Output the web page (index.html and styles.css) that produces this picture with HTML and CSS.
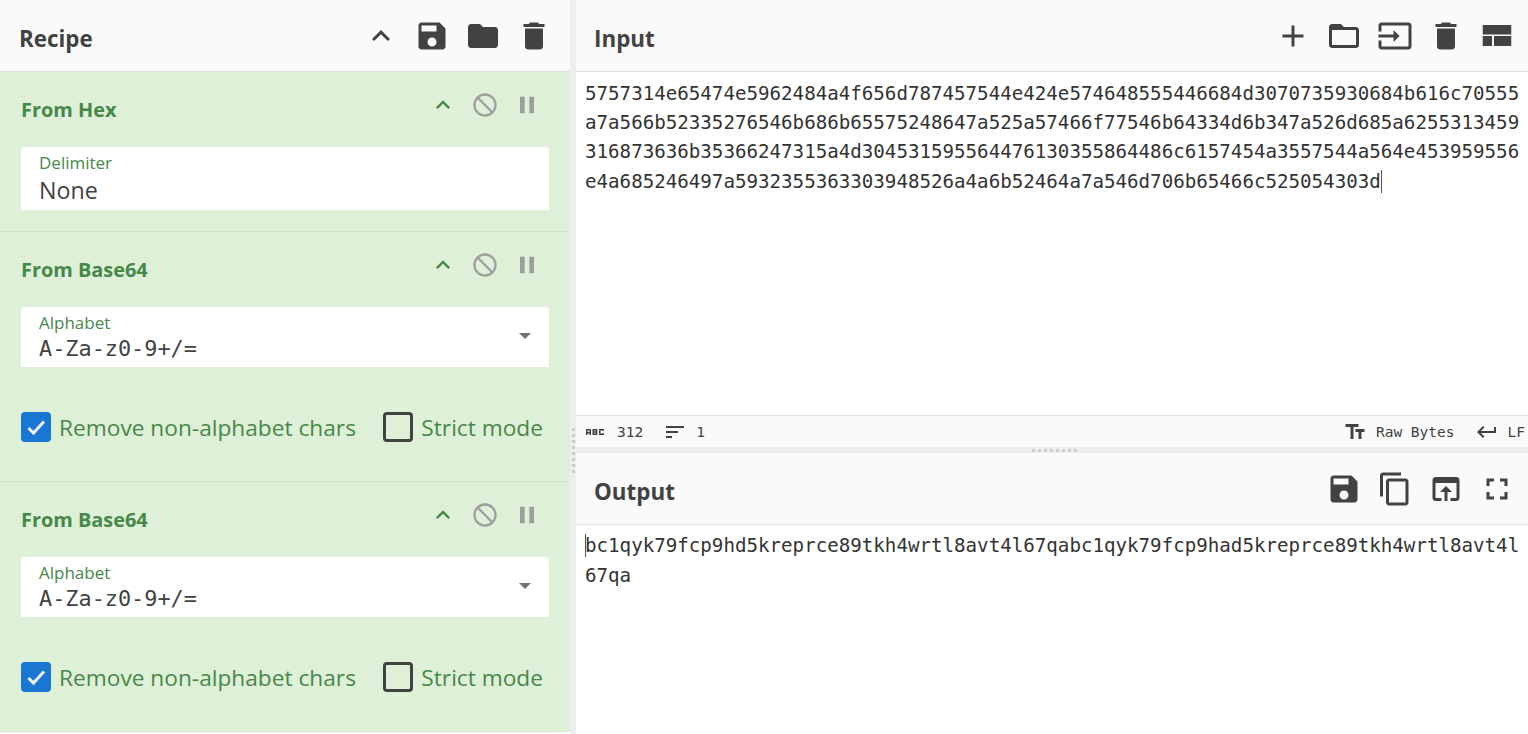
FILE: index.html
```html
<!DOCTYPE html>
<html lang="en">
<head>
<meta charset="utf-8">
<title>Recipe</title>
<link rel="stylesheet" href="styles.css">
</head>
<body>
<svg class="defs" aria-hidden="true">
  <symbol id="i-up" viewBox="0 0 24 24"><path d="M7.41 15.41L12 10.83l4.59 4.58L18 14l-6-6-6 6z"/></symbol>
  <symbol id="i-save" viewBox="0 0 24 24"><path d="M17 3H5c-1.11 0-2 .9-2 2v14c0 1.1.89 2 2 2h14c1.1 0 2-.9 2-2V7l-4-4zm-5 16c-1.66 0-3-1.34-3-3s1.34-3 3-3 3 1.34 3 3-1.34 3-3 3zm3-10H5V5h10v4z"/></symbol>
  <symbol id="i-folder" viewBox="0 0 24 24"><path d="M10 4H4c-1.1 0-1.99.9-1.99 2L2 18c0 1.1.9 2 2 2h16c1.1 0 2-.9 2-2V8c0-1.1-.9-2-2-2h-8l-2-2z"/></symbol>
  <symbol id="i-trash" viewBox="0 0 24 24"><path d="M6 19c0 1.1.9 2 2 2h8c1.1 0 2-.9 2-2V7H6v12zM19 4h-3.5l-1-1h-5l-1 1H5v2h14V4z"/></symbol>
  <symbol id="i-block" viewBox="0 0 24 24"><path transform="matrix(-1 0 0 1 24 0)" d="M12 2C6.48 2 2 6.48 2 12s4.48 10 10 10 10-4.48 10-10S17.52 2 12 2zM4 12c0-4.42 3.58-8 8-8 1.85 0 3.55.63 4.9 1.69L5.69 16.9C4.63 15.55 4 13.85 4 12zm8 8c-1.85 0-3.55-.63-4.9-1.69L18.31 7.1C19.37 8.45 20 10.15 20 12c0 4.42-3.58 8-8 8z"/></symbol>
  <symbol id="i-pause" viewBox="0 0 24 24"><path d="M6 19h4V5H6v14zm8-14v14h4V5h-4z"/></symbol>
  <symbol id="i-add" viewBox="0 0 24 24"><path d="M19 13h-6v6h-2v-6H5v-2h6V5h2v6h6v2z"/></symbol>
  <symbol id="i-open" viewBox="0 0 24 24"><path d="M20 6h-8l-2-2H4c-1.1 0-1.99.9-1.99 2L2 18c0 1.1.9 2 2 2h16c1.1 0 2-.9 2-2V8c0-1.1-.9-2-2-2zm0 12H4V8h16v10z"/></symbol>
  <symbol id="i-input" viewBox="0 0 24 24"><path d="M21 3.01H3c-1.1 0-2 .9-2 2V9h2V4.99h18v14.03H3V15H1v4.01c0 1.1.9 1.98 2 1.98h18c1.1 0 2-.88 2-1.98v-14c0-1.11-.9-2-2-2zM11 16l4-4-4-4v3H1v2h10v3z"/></symbol>
  <symbol id="i-layout" viewBox="0 0 24 24"><path d="M2.5 4.7h19V11h-19zM2.5 12h6.2v6.7H2.5zM10 12h11.5v6.7H10z"/></symbol>
  <symbol id="i-copy" viewBox="0 0 24 24"><path d="M16 1H4c-1.1 0-2 .9-2 2v14h2V3h12V1zm3 4H8c-1.1 0-2 .9-2 2v14c0 1.1.9 2 2 2h11c1.1 0 2-.9 2-2V7c0-1.1-.9-2-2-2zm0 16H8V7h11v14z"/></symbol>
  <symbol id="i-browser" viewBox="0 0 24 24"><path d="M19 4H5c-1.11 0-2 .9-2 2v12c0 1.1.89 2 2 2h4v-2H5V8h14v10h-4v2h4c1.1 0 2-.9 2-2V6c0-1.1-.89-2-2-2zm-7 6l-4 4h3v6h2v-6h3l-4-4z"/></symbol>
  <symbol id="i-full" viewBox="0 0 24 24"><path d="M7 14H5v5h5v-2H7v-3zm-2-4h2V7h3V5H5v5zm12 7h-3v2h5v-5h-2v3zM14 5v2h3v3h2V5h-5z"/></symbol>
  <symbol id="i-abc" viewBox="0 0 24 24"><path d="M21 11h-1.5v-.5h-2v3h2V13H21v1c0 .55-.45 1-1 1h-3c-.55 0-1-.45-1-1v-4c0-.55.45-1 1-1h3c.55 0 1 .45 1 1v1zM8 10v5H6.5v-1.5h-2V15H3v-5c0-.55.45-1 1-1h3c.55 0 1 .45 1 1zm-1.5.5h-2V12h2v-1.5zm7 1.5c.55 0 1 .45 1 1v1c0 .55-.45 1-1 1h-4V9h4c.55 0 1 .45 1 1v1c0 .55-.45 1-1 1zM11 10.5v.75h2v-.75h-2zm2 2.25h-2v.75h2v-.75z"/></symbol>
  <symbol id="i-sort" viewBox="0 0 24 24"><path d="M3 18h6v-2H3v2zM3 6v2h18V6H3zm0 7h12v-2H3v2z"/></symbol>
  <symbol id="i-text" viewBox="0 0 24 24"><path d="M2.5 4v3h5v12h3V7h5V4h-13zm19 5h-9v3h3v7h3v-7h3V9z"/></symbol>
  <symbol id="i-return" viewBox="0 0 24 24"><path d="M19 7v4H5.83l3.58-3.59L8 6l-6 6 6 6 1.41-1.41L5.83 13H21V7z"/></symbol>
</svg>

<div class="app">
  <section class="recipe">
    <header class="bar">
      <h1 class="bar-title">Recipe</h1>
      <div class="tools tools-recipe">
        <svg class="tool"><use href="#i-up"/></svg>
        <svg class="tool"><use href="#i-save"/></svg>
        <svg class="tool"><use href="#i-folder"/></svg>
        <svg class="tool"><use href="#i-trash"/></svg>
      </div>
    </header>

    <article class="op op-short">
      <div class="op-head">
        <h2 class="op-title">From Hex</h2>
        <div class="op-tools">
          <svg class="op-icon op-up"><use href="#i-up"/></svg>
          <svg class="op-icon op-grey"><use href="#i-block"/></svg>
          <svg class="op-icon op-grey"><use href="#i-pause"/></svg>
        </div>
      </div>
      <div class="field field-tall">
        <span class="field-label">Delimiter</span>
        <span class="field-value">None</span>
      </div>
    </article>

    <article class="op">
      <div class="op-head">
        <h2 class="op-title">From Base64</h2>
        <div class="op-tools">
          <svg class="op-icon op-up"><use href="#i-up"/></svg>
          <svg class="op-icon op-grey"><use href="#i-block"/></svg>
          <svg class="op-icon op-grey"><use href="#i-pause"/></svg>
        </div>
      </div>
      <div class="field">
        <span class="field-label">Alphabet</span>
        <span class="field-mono">A-Za-z0-9+/=</span>
        <span class="caret-down"></span>
      </div>
      <div class="checks">
        <label class="check">
          <span class="box box-on"><svg class="tick" viewBox="0 0 24 24"><path d="M4.5 13l5 5L20 6.5"/></svg></span>
          <span class="check-text">Remove non-alphabet chars</span>
        </label>
        <label class="check">
          <span class="box"></span>
          <span class="check-text">Strict mode</span>
        </label>
      </div>
    </article>

    <article class="op">
      <div class="op-head">
        <h2 class="op-title">From Base64</h2>
        <div class="op-tools">
          <svg class="op-icon op-up"><use href="#i-up"/></svg>
          <svg class="op-icon op-grey"><use href="#i-block"/></svg>
          <svg class="op-icon op-grey"><use href="#i-pause"/></svg>
        </div>
      </div>
      <div class="field">
        <span class="field-label">Alphabet</span>
        <span class="field-mono">A-Za-z0-9+/=</span>
        <span class="caret-down"></span>
      </div>
      <div class="checks">
        <label class="check">
          <span class="box box-on"><svg class="tick" viewBox="0 0 24 24"><path d="M4.5 13l5 5L20 6.5"/></svg></span>
          <span class="check-text">Remove non-alphabet chars</span>
        </label>
        <label class="check">
          <span class="box"></span>
          <span class="check-text">Strict mode</span>
        </label>
      </div>
    </article>
  </section>

  <div class="gutter-v"><span class="grip-v"></span></div>

  <section class="io">
    <div class="pane pane-input">
      <header class="bar">
        <h1 class="bar-title bar-title-io">Input</h1>
        <div class="tools">
          <svg class="tool"><use href="#i-add"/></svg>
          <svg class="tool"><use href="#i-open"/></svg>
          <svg class="tool"><use href="#i-input"/></svg>
          <svg class="tool"><use href="#i-trash"/></svg>
          <svg class="tool"><use href="#i-layout"/></svg>
        </div>
      </header>
      <div class="text">5757314e65474e5962484a4f656d787457544e424e574648555446684d3070735930684b616c70555a7a566b52335276546b686b65575248647a525a57466f77546b64334d6b347a526d685a6255313459316873636b35366247315a4d304531595564476130355864486c6157454a3557544a564e453959556e4a685246497a5932355363303948526a4a6b52464a7a546d706b65466c525054303d<span class="cursor"></span></div>
      <footer class="status">
        <div class="status-group">
          <svg class="status-icon"><use href="#i-abc"/></svg>
          <span class="status-text status-count">312</span>
          <svg class="status-icon status-sort"><use href="#i-sort"/></svg>
          <span class="status-text">1</span>
        </div>
        <div class="status-group">
          <svg class="status-icon"><use href="#i-text"/></svg>
          <span class="status-text status-enc">Raw Bytes</span>
          <svg class="status-icon status-ret"><use href="#i-return"/></svg>
          <span class="status-text">LF</span>
        </div>
      </footer>
    </div>

    <div class="gutter-h"><span class="grip-h"></span></div>

    <div class="pane pane-output">
      <header class="bar">
        <h1 class="bar-title bar-title-io">Output</h1>
        <div class="tools">
          <svg class="tool"><use href="#i-save"/></svg>
          <svg class="tool"><use href="#i-copy"/></svg>
          <svg class="tool"><use href="#i-browser"/></svg>
          <svg class="tool"><use href="#i-full"/></svg>
        </div>
      </header>
      <div class="text text-output"><span class="cursor"></span>bc1qyk79fcp9hd5kreprce89tkh4wrtl8avt4l67qabc1qyk79fcp9had5kreprce89tkh4wrtl8avt4l67qa</div>
    </div>
  </section>
</div>
</body>
</html>
```

FILE: styles.css
```css
* { box-sizing: border-box; }
html, body { height: 100%; margin: 0; }
body {
  overflow: hidden;
  background: #fff;
  color: #424242;
  font-family: "Open Sans", "Noto Sans", "Liberation Sans", sans-serif;
}
.defs { display: none; }
.app { display: flex; height: 734px; }

/* Recipe column */
.recipe { width: 570px; flex: none; background: #fff; }
.bar {
  display: flex;
  align-items: center;
  justify-content: space-between;
  height: 72px;
  padding-right: 5.5px;
  background: #fafafa;
  border-bottom: 1px solid #e0e0e0;
}
.bar-title {
  margin: 6px 0 0 19px;
  font-size: 22.4px;
  font-weight: 700;
  color: #424242;
}
.bar-title-io { margin-left: 18px; }
.tools { display: flex; }
.tools-recipe { margin-right: 5.5px; }
.tool { width: 36px; height: 36px; margin: 0 7.5px; fill: #424242; }

/* Operations */
.op {
  height: 250px;
  padding: 0 21px;
  background: #dff0d8;
  border-bottom: 1px solid #d3e6ca;
}
.op-short { height: 160px; }
.op-head {
  display: flex;
  justify-content: space-between;
  height: 75px;
  padding-top: 19px;
}
.op-title {
  margin: 0;
  font-size: 19.9px;
  line-height: 38px;
  font-weight: 700;
  color: #468847;
}
.op-tools { display: flex; align-items: flex-start; margin-right: 1px; }
.op-icon { width: 28px; height: 28px; margin: 0 7px; }
.op-up { fill: #468847; }
.op-grey { fill: #9e9e9e; }

.field {
  position: relative;
  display: flex;
  flex-direction: column;
  height: 60px;
  padding: 6px 18px 0;
  background: #fff;
  border-radius: 4px 4px 0 0;
}
.field-tall { height: 63px; }
.field-label { font-size: 17px; line-height: 20px; color: #468847; }
.field-value { font-size: 23.2px; line-height: 34px; color: #424242; }
.field-mono {
  margin-top: 1px;
  font-family: "DejaVu Sans Mono", "Liberation Mono", monospace;
  font-size: 21.87px;
  line-height: 30px;
  color: #424242;
}
.caret-down {
  position: absolute;
  right: 18px;
  top: 26px;
  border-left: 6px solid transparent;
  border-right: 6px solid transparent;
  border-top: 6px solid #6c757d;
}

.checks { display: flex; justify-content: space-between; margin-top: 44px; }
.check { display: flex; align-items: center; }
.box {
  display: flex;
  align-items: center;
  justify-content: center;
  width: 30px;
  height: 30px;
  border: 3px solid #424242;
  border-radius: 4px;
}
.box-on { background: #1976d2; border-color: #1976d2; }
.tick { width: 24px; height: 24px; fill: none; stroke: #eef4fa; stroke-width: 3; }
.check-text { margin: 2px 0 0 8px; font-size: 22.7px; line-height: 30px; color: #468847; }
.check + .check { margin-right: 6px; }

/* Splitters */
.gutter-v { position: relative; width: 6px; flex: none; background: #eee; }
.grip-v {
  position: absolute;
  left: 2px;
  top: 428px;
  width: 3px;
  height: 45px;
  background: repeating-linear-gradient(to bottom, #ccc 0 3px, transparent 3px 6px);
}
.gutter-h { position: relative; height: 6px; flex: none; background: #eee; }
.grip-h {
  position: absolute;
  left: 456px;
  top: 2px;
  width: 45px;
  height: 3px;
  background: repeating-linear-gradient(to right, #ccc 0 3px, transparent 3px 6px);
}

/* Input / output */
.io { flex: 1; min-width: 0; display: flex; flex-direction: column; }
.pane { display: flex; flex-direction: column; background: #fff; }
.pane-input { height: 447px; }
.pane-output { flex: 1; min-height: 0; }
.text {
  flex: 1;
  min-height: 0;
  padding: 7px 0 0 9px;
  font-family: "DejaVu Sans Mono", "Liberation Mono", monospace;
  font-size: 19.17px;
  line-height: 29.2px;
  color: #333;
  word-break: break-all;
}
.text-output { padding-top: 6px; line-height: 29.6px; }
.cursor {
  display: inline-block;
  width: 1px;
  height: 23px;
  margin-right: -1px;
  background: #555;
  vertical-align: -5px;
}
.status {
  display: flex;
  justify-content: space-between;
  align-items: center;
  height: 32px;
  padding: 0 3px 0 9px;
  background: #fafafa;
  border-top: 1px solid #e0e0e0;
}
.status-group { display: flex; align-items: center; }
.status-icon { width: 24px; height: 24px; margin: 0 -2px; fill: #424242; }
.status-text {
  font-family: "DejaVu Sans Mono", "Liberation Mono", monospace;
  font-size: 14.5px;
  color: #424242;
}
.status-count { margin-left: 12px; }
.status-sort { margin-left: 20px; margin-right: 9px; }
.status-enc { margin-left: 11px; }
.status-ret { margin-left: 20px; margin-right: 9px; }
```
